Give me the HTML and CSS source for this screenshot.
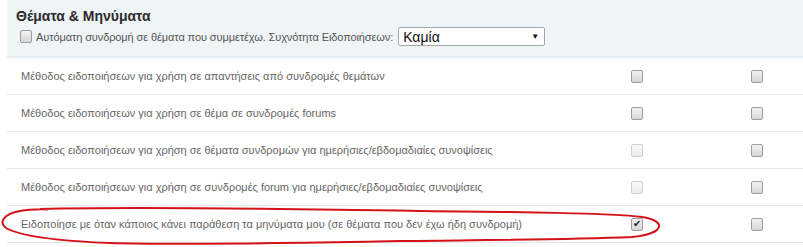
FILE: index.html
```html
<!DOCTYPE html>
<html lang="el">
<head>
<meta charset="utf-8">
<link rel="stylesheet" href="styles.css">
</head>
<body>
<div class="panel">
  <div class="head">
    <h3 class="title">Θέματα &amp; Μηνύματα</h3>
    <div class="auto">
      <span class="cb"></span>
      <span class="auto-label">Αυτόματη συνδρομή σε θέματα που συμμετέχω. Συχνότητα Ειδοποιήσεων:</span>
      <span class="select"><span class="sel-val">Καμία</span><span class="arrow">▼</span></span>
    </div>
  </div>
  <div class="rows">
    <div class="row">
      <span class="label">Μέθοδος ειδοποιήσεων για χρήση σε απαντήσεις από συνδρομές θεμάτων</span>
      <span class="cell"><span class="cb"></span></span>
      <span class="cell last"><span class="cb"></span></span>
    </div>
    <div class="row">
      <span class="label">Μέθοδος ειδοποιήσεων για χρήση σε θέμα σε συνδρομές forums</span>
      <span class="cell"><span class="cb"></span></span>
      <span class="cell last"><span class="cb"></span></span>
    </div>
    <div class="row">
      <span class="label">Μέθοδος ειδοποιήσεων για χρήση σε θέματα συνδρομών για ημερήσιες/εβδομαδιαίες συνοψίσεις</span>
      <span class="cell"><span class="cb disabled"></span></span>
      <span class="cell last"><span class="cb"></span></span>
    </div>
    <div class="row">
      <span class="label">Μέθοδος ειδοποιήσεων για χρήση σε συνδρομές forum για ημερήσιες/εβδομαδιαίες συνοψίσεις</span>
      <span class="cell"><span class="cb disabled"></span></span>
      <span class="cell last"><span class="cb"></span></span>
    </div>
    <div class="row">
      <span class="label">Ειδοποίησε με όταν κάποιος κάνει παράθεση τα μηνύματα μου (σε θέματα που δεν έχω ήδη συνδρομή)</span>
      <span class="cell"><span class="cb checked">✔</span></span>
      <span class="cell last"><span class="cb"></span></span>
    </div>
  </div>
  <svg class="circle" width="803" height="247" viewBox="0 0 803 247">
    <path d="M40 209 C120 207 300 209 420 211 C520 212 610 213 642 217 C668 221 664 234 632 237 C560 240 480 240 400 241 C300 243 180 245 110 243 C60 241 20 236 6 228 C-2 222 4 214 20 211 C28 209.5 34 209 48 209.5" fill="none" stroke="#d4121a" stroke-width="2"/>
  </svg>
</div>
</body>
</html>
```
FILE: styles.css
```css
html, body {
  margin: 0;
  padding: 0;
  background: #ffffff;
}
body {
  font-family: "Liberation Sans", Arial, sans-serif;
  width: 803px;
  height: 247px;
  overflow: hidden;
}
.panel {
  position: relative;
  margin-left: 7px;
}
.head {
  background: #eff4f7;
  height: 58px;
  border-bottom: 2px solid #e6eef1;
  padding-left: 9px;
  box-sizing: border-box;
}
.title {
  margin: 0;
  padding-top: 8px;
  font-size: 14px;
  font-weight: bold;
  color: #2b2b2b;
  line-height: 16px;
}
.auto {
  display: flex;
  align-items: center;
  margin-top: 3px;
  padding-left: 4px;
}
.auto-label {
  font-size: 11px;
  letter-spacing: -0.1px;
  color: #555;
  margin-left: 4px;
  margin-right: 5px;
}
.select {
  display: inline-flex;
  align-items: center;
  justify-content: space-between;
  width: 147px;
  height: 19px;
  box-sizing: border-box;
  border: 1px solid #a6a6a6;
  border-radius: 2px;
  background: #fff;
  padding: 0 5px 0 4px;
}
.sel-val {
  font-size: 14px;
  color: #111;
}
.arrow {
  font-size: 8px;
  color: #111;
}
.row {
  display: flex;
  align-items: center;
  height: 37px;
  border-bottom: 1px solid #e7e7e7;
  box-sizing: border-box;
}
.label {
  flex: 1;
  padding-left: 14px;
  font-size: 11px;
  color: #666;
}
.cell {
  width: 120px;
  display: flex;
  justify-content: flex-start;
}
.cell.last {
  width: 52px;
}
.cb {
  display: inline-flex;
  align-items: center;
  justify-content: center;
  width: 12px;
  height: 13px;
  box-sizing: border-box;
  border: 1px solid #9d9d9d;
  border-radius: 2px;
  background: linear-gradient(#f2f2f2, #d6d6d6);
  font-size: 10px;
  line-height: 1;
  color: #222;
}
.cb.disabled {
  border-color: #cfcfcf;
  background: linear-gradient(#fafafa, #ececec);
}
.circle {
  position: absolute;
  left: -7px;
  top: 0;
  pointer-events: none;
}
```
